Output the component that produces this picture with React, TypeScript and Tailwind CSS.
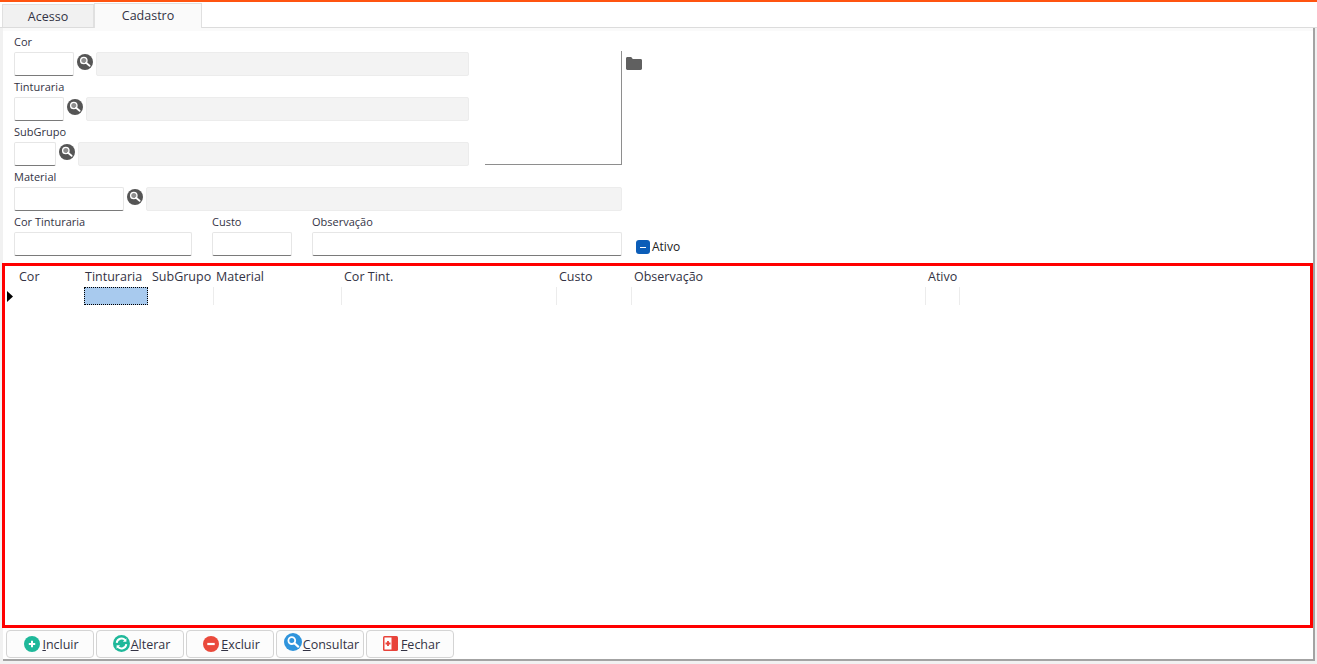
import React from "react";

const columns = [
  { label: "Cor", width: 79, pad: 14 },
  { label: "Tinturaria", width: 64, pad: 1 },
  { label: "SubGrupo", width: 66, pad: 4 },
  { label: "Material", width: 128, pad: 2 },
  { label: "Cor Tint.", width: 215, pad: 2 },
  { label: "Custo", width: 75, pad: 2 },
  { label: "Observação", width: 294, pad: 2 },
  { label: "Ativo", width: 34, pad: 2 },
];

const SearchIcon = () => (
  <svg width="16" height="16" viewBox="0 0 16 16" className="mt-[-4px] shrink-0">
    <circle cx="8" cy="8" r="8" fill="#555555" />
    <circle cx="6.800" cy="6.500" r="3.200" fill="#8f8f8f" stroke="#ffffff" strokeWidth="1.300" />
    <path d="M9 8.800l3.600 3" stroke="#ffffff" strokeWidth="1.800" strokeLinecap="round" />
  </svg>
);

const Field = ({ label, width, readOnly }: { label: string; width: string; readOnly?: string }) => (
  <div className="flex flex-col">
    <label className="h-[10px] text-[11px] leading-[10px] text-[#333344]">{label}</label>
    <div className="mt-[5px] flex items-center gap-[3px]">
      <input className={`h-[24px] rounded-[2px] border border-[#e6e6e6] border-b-[#7a7a7a] bg-white ${width}`} />
      <SearchIcon />
      <div className={`h-[24px] rounded-[2px] border border-[#ececec] bg-[#f3f3f3] ${readOnly}`} />
    </div>
  </div>
);

const PlainField = ({ label, width }: { label: string; width: string }) => (
  <div className="flex flex-col">
    <label className="h-[10px] text-[11px] leading-[10px] text-[#333344]">{label}</label>
    <input className={`mt-[5px] h-[24px] rounded-[2px] border border-[#e6e6e6] border-b-[#7a7a7a] bg-white ${width}`} />
  </div>
);

const ToolButton = ({ icon, hot, rest, width }: { icon: React.ReactNode; hot: string; rest: string; width: string }) => (
  <button className={`flex h-[28px] items-center justify-center rounded-[4px] border border-[#d4d4d4] bg-[#fcfcfc] pl-[3px] text-[12.5px] text-[#333344] ${width}`}>
    {icon}
    <span className="mt-[4px]">
      <span className="underline">{hot}</span>
      {rest}
    </span>
  </button>
);

const App = () => {
  return (
    <div className="flex h-[664px] w-[1317px] flex-col overflow-hidden bg-white font-['Open_Sans','Noto_Sans',sans-serif]">
      <div className="h-[2px] shrink-0 bg-[#ff5410]" />

      {/* tabs */}
      <div className="relative z-10 flex h-[25px] shrink-0 items-end pl-[2px]">
        <div className="flex h-[23px] w-[92px] items-center justify-center border border-b-0 border-[#e0e0e0] bg-[#f1f1f1] pt-[3px] text-[12.5px] text-[#333344]">
          Acesso
        </div>
        <div className="-mb-px flex h-[25px] w-[108px] items-center justify-center border border-b-0 border-[#e0e0e0] bg-[#fafafa] text-[12.5px] text-[#333344]">
          Cadastro
        </div>
      </div>

      <div className="flex min-h-0 flex-1 flex-col border-t border-[#dcdcdc] bg-[#f1f1f1]">
        <div className="mr-[2px] ml-[3px] mb-[3px] flex min-h-0 flex-1 flex-col border-r-2 border-b-2 border-[#a3a3a3] bg-white">
          <div className="h-[3px] shrink-0 bg-[#fafafa]" />
          {/* form */}
          <div className="flex h-[232px] shrink-0 flex-col pt-[6px] pl-[11px]">
            <div className="flex">
              <div className="flex w-[471px] flex-col gap-[6px]">
                <Field label="Cor" width="w-[60px]" readOnly="w-[373px]" />
                <Field label="Tinturaria" width="w-[50px]" readOnly="w-[383px]" />
                <Field label="SubGrupo" width="w-[42px]" readOnly="w-[391px]" />
              </div>
              <div className="mt-[14px] h-[114px] w-[137px] border-r border-b border-[#8e8e8e]" />
              <svg width="16" height="13" viewBox="0 0 16 13" className="mt-[20px] ml-[4px]">
                <path d="M0 1.500C0 .7.6 0 1.400 0h3.800l1.600 2h7.800c.8 0 1.400.6 1.400 1.400v8.200c0 .8-.6 1.400-1.400 1.400H1.400C.6 13 0 12.400 0 11.600z" fill="#606060" />
              </svg>
            </div>
            <div className="mt-[6px]">
              <Field label="Material" width="w-[110px]" readOnly="w-[476px]" />
            </div>
            <div className="mt-[6px] flex items-end">
              <PlainField label="Cor Tinturaria" width="w-[178px]" />
              <div className="ml-[20px]">
                <PlainField label="Custo" width="w-[80px]" />
              </div>
              <div className="ml-[20px]">
                <PlainField label="Observação" width="w-[310px]" />
              </div>
              <div className="ml-[14px] flex items-center gap-[2px] text-[12px] text-[#222222]">
                <span className="flex h-[14px] w-[14px] items-center justify-center rounded-[3px] bg-[#0b5db8]">
                  <span className="h-px w-[6px] bg-white" />
                </span>
                Ativo
              </div>
            </div>
          </div>

          {/* grid */}
          <div className="ml-[-1px] h-[365px] shrink-0 border-[3px] border-[#ff0000] bg-white">
            <div className="flex h-[21px] items-center pt-[2px] text-[12.5px] text-[#333344]">
              {columns.map((col) => (
                <div
                  key={col.label}
                  className="shrink-0 whitespace-nowrap"
                  style={{ width: col.width, paddingLeft: col.pad }}
                >
                  {col.label}
                </div>
              ))}
            </div>
            <div className="flex h-[18px] items-center">
              <div className="flex w-[79px] shrink-0 items-center pl-[2px]">
                <svg width="6" height="11" viewBox="0 0 6 11">
                  <path d="M0 0l6 5.500-6 5.500z" fill="#000000" />
                </svg>
              </div>
              {columns.slice(1).map((col, i) => (
                <div
                  key={col.label}
                  className={
                    i === 0
                      ? "h-[18px] shrink-0 border border-dotted border-black bg-[#a8caee]"
                      : "h-[18px] shrink-0 border-r border-[#ececec]"
                  }
                  style={{ width: col.width }}
                />
              ))}
            </div>
          </div>

          {/* buttons */}
          <div className="flex flex-1 items-center gap-[2px] pl-[3px]">
            <ToolButton
              width="w-[88px]"
              hot="I"
              rest="ncluir"
              icon={
                <svg width="16" height="16" viewBox="0 0 16 16" className="mr-[2px]">
                  <circle cx="8" cy="8" r="8" fill="#1fb89a" />
                  <path d="M8 4.800v6.400M4.800 8h6.400" stroke="#fff" strokeWidth="2" />
                </svg>
              }
            />
            <ToolButton
              width="w-[88px]"
              hot="A"
              rest="lterar"
              icon={
                <svg width="17" height="17" viewBox="0 0 16 16" className="mr-[1px]">
                  <circle cx="8" cy="8" r="8" fill="#1fb89a" />
                  <path d="M3.500 7.500A4.600 4.600 0 0 1 11.600 5M12.500 8.500A4.600 4.600 0 0 1 4.400 11" stroke="#fff" strokeWidth="1.800" fill="none" />
                  <path d="M12.600 3v3.400H9.300zM3.400 13V9.600h3.300z" fill="#fff" />
                </svg>
              }
            />
            <ToolButton
              width="w-[88px]"
              hot="E"
              rest="xcluir"
              icon={
                <svg width="16" height="16" viewBox="0 0 16 16" className="mr-[2px]">
                  <circle cx="8" cy="8" r="8" fill="#ea4a3c" />
                  <path d="M4.300 8h7.400" stroke="#fff" strokeWidth="2.200" />
                </svg>
              }
            />
            <ToolButton
              width="w-[88px]"
              hot="C"
              rest="onsultar"
              icon={
                <svg width="18" height="18" viewBox="0 0 18 18" className="mr-[1px] -mt-[3px]">
                  <circle cx="9" cy="9" r="9" fill="#2f94dc" />
                  <circle cx="7.800" cy="7.600" r="3.400" fill="#2f94dc" stroke="#fff" strokeWidth="1.800" />
                  <path d="M10.400 10.200l3.800 3.400" stroke="#fff" strokeWidth="2.200" strokeLinecap="round" />
                </svg>
              }
            />
            <ToolButton
              width="w-[88px]"
              hot="F"
              rest="echar"
              icon={
                <svg width="15" height="15" viewBox="0 0 15 15" className="mr-[3px]">
                  <rect x="0" y="0" width="15" height="15" rx="1.500" fill="#e8433a" />
                  <rect x="1.500" y="1.500" width="7" height="12" fill="#ffffff" />
                  <path d="M2.500 7.500h5M5 5v5" stroke="#e8433a" strokeWidth="1.800" />
                </svg>
              }
            />
          </div>
        </div>
      </div>
    </div>
  );
};

export default App;
